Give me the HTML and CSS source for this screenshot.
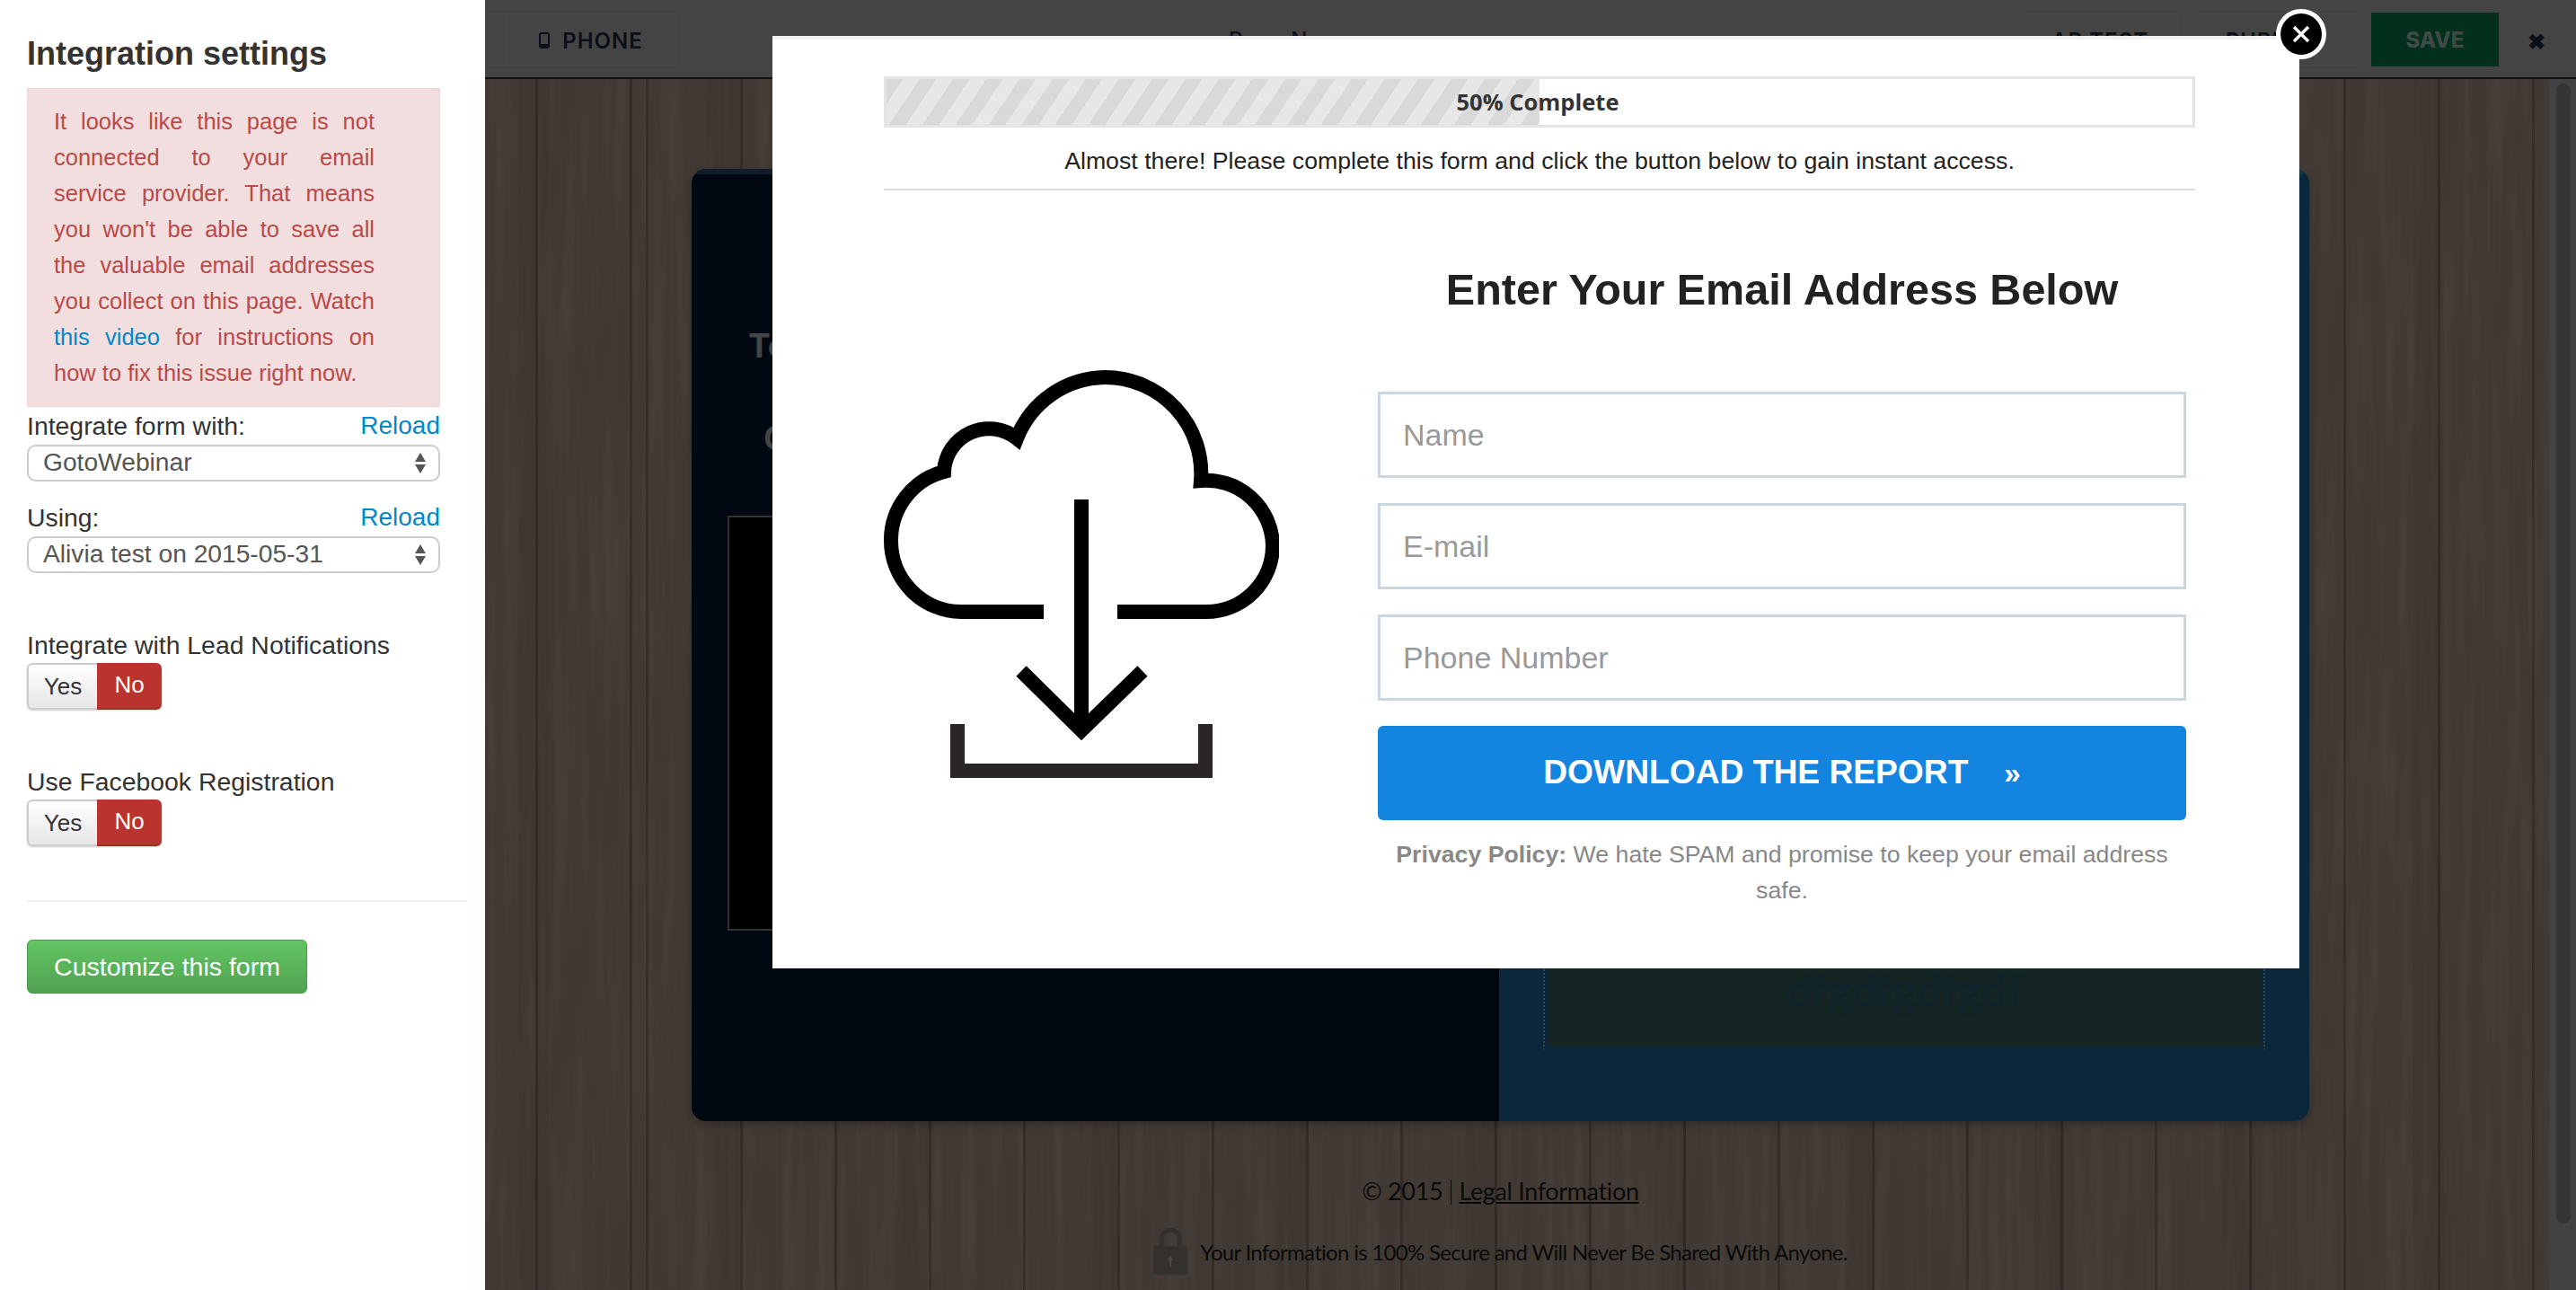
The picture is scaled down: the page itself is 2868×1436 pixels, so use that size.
FILE: index.html
```html
<!DOCTYPE html>
<html lang="en">
<head>
    <meta charset="UTF-8">
    <title>Integration settings</title>
    <link rel="stylesheet" href="styles.css">
</head>
<body>

    <aside class="sidebar">
        <h2 class="side-title">Integration settings</h2>

        <div class="alert">
            It looks like this page is not connected to your email service provider. That means you won't be able to save all the valuable email addresses you collect on this page. Watch <a href="#">this video</a> for instructions on how to fix this issue right now.
        </div>

        <div class="field-head field-first">
            <span>Integrate form with:</span>
            <a href="#">Reload</a>
        </div>
        <div class="select">
            <span>GotoWebinar</span>
            <span class="arrows"><i class="arrow-up"></i><i class="arrow-down"></i></span>
        </div>

        <div class="field-head field-second">
            <span>Using:</span>
            <a href="#">Reload</a>
        </div>
        <div class="select">
            <span>Alivia test on 2015-05-31</span>
            <span class="arrows"><i class="arrow-up"></i><i class="arrow-down"></i></span>
        </div>

        <div class="toggle-label">Integrate with Lead Notifications</div>
        <div class="toggle">
            <span class="toggle-yes">Yes</span>
            <span class="toggle-no">No</span>
        </div>

        <div class="toggle-label">Use Facebook Registration</div>
        <div class="toggle">
            <span class="toggle-yes">Yes</span>
            <span class="toggle-no">No</span>
        </div>

        <hr class="side-rule">

        <button class="customize">Customize this form</button>
    </aside>

    <main class="stage">
        <svg class="grain" width="100%" height="100%">
            <filter id="woodGrain">
                <feTurbulence type="fractalNoise" baseFrequency="0.09 0.004" numOctaves="3" seed="7"/>
                <feColorMatrix values="0 0 0 0 0.72  0 0 0 0 0.70  0 0 0 0 0.62  0 0 0 0.9 -0.36"/>
            </filter>
            <rect width="100%" height="100%" filter="url(#woodGrain)"/>
        </svg>

        <header class="topbar">
            <div class="bar-left">
                <div class="bar-box bar-stub"></div>
                <div class="bar-box bar-phone">
                    <svg class="phone-icon" width="12" height="18" viewBox="0 0 12 18">
                        <rect x="1" y="1" width="10" height="16" rx="2" fill="none" stroke="#0b0f18" stroke-width="2"/>
                        <rect x="1" y="13" width="10" height="4" fill="#0b0f18"/>
                    </svg>
                    PHONE
                </div>
            </div>
            <div class="bar-name">Page Name</div>
            <div class="bar-right">
                <div class="bar-box bar-ab">AB TEST</div>
                <div class="bar-box bar-pub">PUBLISH</div>
                <div class="bar-save">SAVE</div>
                <div class="bar-close">&#10006;</div>
            </div>
        </header>

        <section class="page">
            <div class="card">
                <div class="card-left">
                    <div class="card-title">To</div>
                    <div class="card-sub">C</div>
                    <div class="video"></div>
                </div>
                <div class="card-right">
                    <div class="optin">dfgdfgdfgdf</div>
                </div>
            </div>
            <div class="legal">&copy; 2015 <span class="legal-bar"></span> <a href="#">Legal Information</a></div>
            <div class="secure">
                <svg width="38" height="52" viewBox="0 0 38 52">
                    <path d="M9 24V12a10 10 0 0 1 20 0V24" fill="none" stroke="#33302e" stroke-width="5"/>
                    <rect y="20" width="38" height="32" rx="3" fill="#33302e"/>
                    <path d="M19 30l3 6h-2v7h-2v-7h-2z" fill="#4a4642"/>
                </svg>
                <span>Your Information is 100% Secure and Will Never Be Shared With Anyone.</span>
            </div>
        </section>

        <div class="scrollbar"><div class="scroll-thumb"></div></div>
    </main>

    <div class="modal">
        <button class="modal-close">
            <svg width="20" height="20" viewBox="0 0 20 20">
                <path d="M2 2L18 18M18 2L2 18" stroke="#fff" stroke-width="3.4"/>
            </svg>
        </button>

        <div class="progress">
            <div class="progress-fill"></div>
            <div class="progress-label">50% Complete</div>
        </div>
        <p class="modal-note">Almost there! Please complete this form and click the button below to gain instant access.</p>

        <div class="modal-body">
            <div class="modal-icon">
                <svg width="440" height="454" viewBox="24 12 440 454" fill="none">
                    <path d="M284 281H383A74 74 0 0 0 457 207A74 74 0 0 0 377 135A107 107 0 0 0 270 20A107 107 0 0 0 172 88A50 50 0 0 0 91 125A79 79 0 0 0 32 202A79 79 0 0 0 110 281H202" stroke="#000" stroke-width="16" stroke-miterlimit="10"/>
                    <path d="M244 156V410" stroke="#000" stroke-width="16"/>
                    <path d="M177 347L244 413L312 347" stroke="#000" stroke-width="16"/>
                    <path d="M106 406V458H382V406" stroke="#2a2626" stroke-width="16"/>
                </svg>
            </div>

            <form class="modal-form">
                <h1 class="form-title">Enter Your Email Address Below</h1>
                <input class="form-input" type="text" placeholder="Name">
                <input class="form-input" type="text" placeholder="E-mail">
                <input class="form-input" type="text" placeholder="Phone Number">
                <button class="form-submit" type="button">DOWNLOAD THE REPORT<span class="submit-arrows">&raquo;</span></button>
                <p class="privacy"><b>Privacy Policy:</b> We hate SPAM and promise to keep your email address safe.</p>
            </form>
        </div>
    </div>

</body>
</html>
```

FILE: styles.css
```css
* {
    box-sizing: border-box;
}
html, body {
    height: 100%;
}
body {
    margin: 0;
    display: flex;
    height: 1436px;
    overflow: hidden;
    font-family: "Liberation Sans", Arial, sans-serif;
    background: #fff;
}
a {
    color: #0088cc;
    text-decoration: none;
}

/* left settings panel */
.sidebar {
    width: 540px;
    flex: none;
    padding: 0 20px 0 30px;
    background: #fff;
    color: #333;
    font-size: 28.4px;
}
.side-title {
    margin: 0;
    padding-top: 37px;
    height: 98px;
    font-size: 36px;
    line-height: 46px;
    color: #333;
}
.alert {
    width: 460px;
    height: 355px;
    padding: 16px 72px 0 29px;
    background: #f2dede;
    border: 1px solid #eed3d7;
    color: #b94a48;
    font-size: 25.5px;
    line-height: 40px;
    text-align: justify;
}
.field-head {
    display: flex;
    justify-content: space-between;
    width: 460px;
    height: 40px;
    line-height: 38px;
}
.field-head a {
    font-size: 28px;
}
.field-first {
    margin-top: 2px;
}
.field-second {
    margin-top: 21px;
}
.select {
    display: flex;
    align-items: center;
    justify-content: space-between;
    width: 460px;
    height: 41px;
    padding: 0 14px 2px 16px;
    border: 2px solid #ccc;
    border-radius: 10px;
    font-size: 28.2px;
    color: #555;
}
.arrows {
    display: flex;
    flex-direction: column;
    gap: 3px;
    margin-top: 2px;
}
.arrow-up, .arrow-down {
    width: 0;
    height: 0;
    border-left: 6px solid transparent;
    border-right: 6px solid transparent;
}
.arrow-up {
    border-bottom: 10px solid #555;
}
.arrow-down {
    border-top: 10px solid #555;
}
.toggle-label {
    margin-top: 60px;
    line-height: 40px;
}
.toggle {
    display: flex;
    width: 150px;
    height: 52px;
    border-radius: 6px;
    font-size: 26px;
    line-height: 48px;
    text-align: center;
    box-shadow: 0 1px 2px rgba(0, 0, 0, 0.2);
}
.toggle-yes {
    width: 78px;
    border: 2px solid #ccc;
    border-right: none;
    border-radius: 6px 0 0 6px;
    background: linear-gradient(#fff, #e6e6e6);
    color: #333;
}
.toggle-no {
    width: 72px;
    border-radius: 0 6px 6px 0;
    background: #b9342e;
    border-bottom: 2px solid #a22e28;
    color: #fff;
}
.side-rule {
    width: 490px;
    margin: 60px 0 42px;
    border: none;
    border-top: 2px solid #eee;
}
.customize {
    display: block;
    width: 312px;
    height: 60px;
    padding: 0;
    border: 1px solid #4a9a4a;
    border-radius: 6px;
    background: linear-gradient(#62c462, #51a351);
    color: #fff;
    font-family: inherit;
    font-size: 28.5px;
}

/* dimmed page behind the popup */
.stage {
    position: relative;
    flex: 1;
    display: flex;
    flex-direction: column;
    overflow: hidden;
    background-color: #3f3731;
    background-image:
        repeating-linear-gradient(90deg, rgba(255, 255, 255, 0.012) 0 37px, rgba(0, 0, 0, 0.02) 37px 71px, rgba(255, 255, 255, 0.006) 71px 211px),
        repeating-linear-gradient(90deg, #322a25 0 3px, transparent 3px 105px);
    background-position: 0 0, 179px 0;
}
.grain {
    position: absolute;
    left: 0;
    top: 0;
    opacity: 0.1;
}
.topbar {
    position: relative;
    display: flex;
    align-items: center;
    justify-content: space-between;
    height: 88px;
    flex: none;
    padding: 2px 0 0;
    background: #444;
    border-bottom: 2px solid #0f1219;
    font-family: Inter, "Open Sans", sans-serif;
    font-size: 24px;
    font-weight: 600;
    letter-spacing: 1px;
    color: #0b0f18;
}
.bar-left, .bar-right {
    display: flex;
    align-items: center;
}
.bar-box {
    height: 58px;
    padding-top: 2px;
    border: 1px solid #484848;
    display: flex;
    align-items: center;
    justify-content: center;
}
.bar-stub {
    width: 23px;
    border-left: none;
}
.bar-phone {
    width: 190px;
    gap: 14px;
}
.bar-name {
    position: absolute;
    left: 828px;
    top: 30px;
    font-weight: 500;
}
.bar-ab {
    width: 174px;
}
.bar-pub {
    width: 179px;
    margin-left: 18px;
}
.bar-save {
    width: 142px;
    height: 60px;
    margin-left: 18px;
    background: #02301d;
    color: #3f4a44;
    font-weight: 800;
    letter-spacing: 0;
    line-height: 62px;
    text-align: center;
}
.bar-close {
    width: 86px;
    padding: 4px 2px 0 0;
    text-align: center;
    font-size: 24px;
}
.page {
    position: relative;
    flex: 1;
    display: flex;
    flex-direction: column;
    align-items: center;
    padding: 100px 0 0 0;
}
.card {
    display: flex;
    width: 1801px;
    height: 1060px;
    margin-left: -67px;
    border-radius: 16px;
    overflow: hidden;
    box-shadow: 0 4px 10px rgba(0, 0, 0, 0.25);
}
.card-left {
    width: 899px;
    padding: 171px 0 0 40px;
    border-top: 6px solid #121c2a;
    background: #010811;
    font-family: Inter, sans-serif;
    font-weight: 700;
    font-size: 37px;
    color: #444;
}
.card-title {
    margin-left: 23px;
    line-height: 40px;
}
.card-sub {
    margin: 63px 0 0 40px;
    line-height: 40px;
}
.video {
    width: 700px;
    height: 462px;
    margin-top: 66px;
    background: #000;
    border: 2px solid #333;
}
.card-right {
    flex: 1;
    padding: 0 49px 0 49px;
    border-top: 6px solid #143248;
    background: #0b273b;
}
.optin {
    width: 804px;
    height: 975px;
    padding: 868px 3px 2px;
    background: #152524;
    background-clip: content-box;
    border: 2px dotted #34464e;
    border-top: none;
    border-bottom-color: #12293a;
    color: #0f2329;
    font-family: Lato, sans-serif;
    font-size: 50px;
    font-weight: 700;
    text-align: center;
    line-height: 80px;
}
.legal {
    margin: 58px 0 0 -67px;
    font-family: Lato, sans-serif;
    font-size: 27px;
    letter-spacing: -0.35px;
    color: #0a0a0a;
    line-height: 40px;
}
.legal a {
    color: #0a0a0a;
    text-decoration: underline;
}
.legal-bar {
    display: inline-block;
    width: 1px;
    height: 28px;
    margin: 0 2px;
    vertical-align: -5px;
    background: #0a0a0a;
}
.secure {
    display: flex;
    align-items: center;
    gap: 14px;
    margin: 21px 0 0 -67px;
    font-family: Lato, sans-serif;
    font-size: 24px;
    letter-spacing: -0.7px;
    color: #0a0a0a;
}
.scrollbar {
    position: absolute;
    right: 0;
    top: 88px;
    bottom: 0;
    width: 30px;
    padding: 5px 6px 0 8px;
    background: #424242;
}
.scroll-thumb {
    height: 1269px;
    border-radius: 8px;
    background: #353535;
}

/* popup */
.modal {
    position: absolute;
    left: 860px;
    top: 40px;
    width: 1700px;
    height: 1038px;
    padding: 41px 116px 0 124px;
    background: #fff;
    border-top: 4px solid #f0f0f0;
}
.modal-close {
    position: absolute;
    left: 1674px;
    top: -34px;
    display: flex;
    align-items: center;
    justify-content: center;
    width: 56px;
    height: 56px;
    padding: 0;
    border: 5px solid #fff;
    border-radius: 50%;
    background: #000;
}
.progress {
    position: relative;
    height: 57px;
    border: 3px solid #e4e4e4;
    background: #fff;
}
.progress-fill {
    width: 50%;
    height: 100%;
    background-color: #d9d9d9;
    background-image: linear-gradient(to top left, #e7e7e7 25%, transparent 25%, transparent 50%, #e7e7e7 50%, #e7e7e7 75%, transparent 75%);
    background-size: 37px 55px;
}
.progress-label {
    position: absolute;
    left: 0;
    right: 4px;
    top: 0;
    text-align: center;
    font-family: "Open Sans", sans-serif;
    font-size: 25.5px;
    font-weight: 700;
    line-height: 51px;
    color: #333;
}
.modal-note {
    margin: 0;
    height: 70px;
    border-bottom: 2px solid #ddd;
    font-size: 26.7px;
    line-height: 74px;
    color: #222;
    text-align: center;
}
.modal-body {
    display: flex;
}
.modal-icon {
    width: 550px;
    flex: none;
    padding-top: 200px;
}
.modal-icon svg {
    display: block;
}
.modal-form {
    display: flex;
    flex-direction: column;
    width: 900px;
}
.form-title {
    margin: 78px 0 0;
    height: 146px;
    font-size: 48.5px;
    line-height: 64px;
    color: #222;
    text-align: center;
}
.form-input {
    height: 96px;
    margin-bottom: 28px;
    padding: 0 25px;
    border: 3px solid #c9d6de;
    border-radius: 0;
    font-family: inherit;
    font-size: 34px;
    outline: none;
}
.form-input::placeholder {
    color: #999;
    opacity: 1;
}
.form-submit {
    height: 105px;
    padding: 0 0 2px;
    border: none;
    border-radius: 6px;
    background: #1384df;
    color: #fff;
    font-family: inherit;
    font-size: 37.2px;
    font-weight: 700;
}
.submit-arrows {
    margin-left: 40px;
    font-size: 33px;
}
.privacy {
    margin: 18px 0 0;
    font-size: 26.7px;
    line-height: 40px;
    color: #888;
    text-align: center;
}
```
